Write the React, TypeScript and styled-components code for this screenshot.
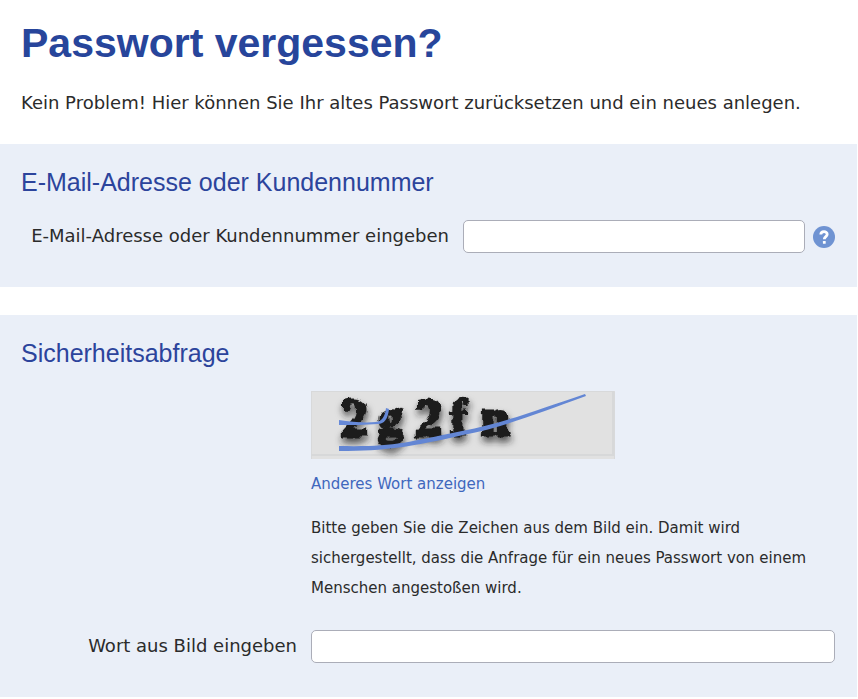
import React from "react";
import styled, { createGlobalStyle } from "styled-components";

const GlobalStyle = createGlobalStyle`
  *, *::before, *::after { box-sizing: border-box; }
  body {
    margin: 0;
    background: #fff;
    color: #2b2b2b;
    font-family: "DejaVu Sans", Verdana, sans-serif;
    font-size: 18px;
    line-height: 30px;
  }
`;

const Page = styled.main`
  padding-right: 1px;
`;

const Intro = styled.header`
  padding: 20px 21px 26px;
`;

const Title = styled.h1`
  margin: 0 0 22px;
  color: #27459b;
  font: bold 41px/46px "Liberation Sans", Arial, sans-serif;
`;

const Lead = styled.p`
  margin: 0;
`;

const Form = styled.form`
  display: flex;
  flex-direction: column;
  gap: 28px;
`;

const Panel = styled.section`
  padding: 23px 22px 34px 21px;
  background: #eaeff8;
`;

const PanelTitle = styled.h2`
  margin: 0 0 23px;
  color: #2c449c;
  font: normal 25px/30px "Liberation Sans", Arial, sans-serif;
`;

const Row = styled.div<{ $columns: string }>`
  display: grid;
  grid-template-columns: ${(p) => p.$columns};
  column-gap: 14px;
  align-items: center;
`;

const Label = styled.label`
  padding-bottom: 2px;
  text-align: right;
  white-space: nowrap;
`;

const TextInput = styled.input`
  width: 100%;
  min-width: 0;
  height: 33px;
  padding: 0 8px;
  border: 1px solid #abadb8;
  border-radius: 5px;
  background: #fff;
  color: inherit;
  font: inherit;
`;

const FieldWithHelp = styled.div`
  display: flex;
  align-items: center;
  gap: 8px;
`;

const HelpButton = styled.button`
  display: block;
  flex: none;
  padding: 0;
  border: 0;
  background: none;
  cursor: pointer;

  svg { display: block; }
`;

const CaptchaBlock = styled.div`
  grid-column: 2;
  margin-bottom: 27px;
  font-size: 15px;
`;

const CaptchaImage = styled.svg`
  display: block;
  max-width: 100%;
  overflow: visible;
`;

const Reload = styled.a`
  display: inline-block;
  margin: 10px 0 14px;
  color: #3f67bd;
  text-decoration: none;
`;

const Hint = styled.p`
  margin: 0;
`;

const letters = [
  { char: "2", x: 30, y: 45, size: 54 },
  { char: "g", x: 67, y: 43, size: 50 },
  { char: "2", x: 104, y: 45, size: 54 },
  { char: "f", x: 139, y: 43, size: 50 },
  { char: "n", x: 170, y: 44, size: 52 },
];

function HelpIcon() {
  return (
    <svg width="22" height="22" viewBox="0 0 22 22" aria-hidden="true">
      <circle cx="11" cy="11" r="11" fill="#6f93d2" />
      <path d="M7.8 8.6C7.8 4.8 14.2 4.7 14.2 8.3c0 2.4-2.9 2.3-2.9 5" fill="none" stroke="#fff" strokeWidth="2.8" />
      <rect x="9.9" y="15" width="2.8" height="2.8" rx="0.5" fill="#fff" />
    </svg>
  );
}

function Captcha() {
  return (
    <CaptchaImage width="304" height="68" viewBox="0 0 304 68" role="img" aria-label="Sicherheitsbild">
      <defs>
        <filter id="ink" x="-20%" y="-20%" width="140%" height="160%">
          <feTurbulence type="fractalNoise" baseFrequency="0.12" numOctaves="2" seed="4" result="noise" />
          <feDisplacementMap in="SourceGraphic" in2="noise" scale="7" xChannelSelector="R" yChannelSelector="G" result="rough" />
          <feGaussianBlur in="rough" stdDeviation="0.5" result="soft" />
          <feDropShadow in="soft" dx="1" dy="5" stdDeviation="3.5" floodColor="#222" floodOpacity="0.75" />
        </filter>
      </defs>
      <rect width="304" height="68" fill="#e1e1e1" />
      <path d="M0 .5H303.5V68M.5 0V68" fill="none" stroke="#d8d9da" />
      <path d="M0 64H302V0" fill="none" stroke="#d7d8d9" strokeWidth="2" />
      <g
        filter="url(#ink)"
        fontFamily="Liberation Serif, serif"
        fontWeight="bold"
        fill="#1d1d1d"
        stroke="#1d1d1d"
        strokeWidth="3"
      >
        {letters.map((l) => (
          <text key={l.x} x={l.x} y={l.y} fontSize={l.size}>{l.char}</text>
        ))}
      </g>
      <path d="M28 29C41 31 54 32 65 31C71 30 74 26 75 17L78 18C77 28 73 33 67 33C54 34 41 34 28 34Z" fill="#6689d8" />
      <path d="M28 55C83 56 92 52 151 40C193 32 226 19 274 3L275 5C227 22 194 36 152 44C99 56 76 60 28 60Z" fill="#6386d4" />
    </CaptchaImage>
  );
}

export default function App() {
  return (
    <>
      <GlobalStyle />
      <Page>
        <Intro>
          <Title>Passwort vergessen?</Title>
          <Lead>Kein Problem! Hier können Sie Ihr altes Passwort zurücksetzen und ein neues anlegen.</Lead>
        </Intro>
        <Form onSubmit={(e) => e.preventDefault()}>
          <Panel>
            <PanelTitle>E-Mail-Adresse oder Kundennummer</PanelTitle>
            <Row $columns="minmax(0, 428fr) minmax(0, 372fr)">
              <Label htmlFor="account">E-Mail-Adresse oder Kundennummer eingeben</Label>
              <FieldWithHelp>
                <TextInput id="account" type="text" />
                <HelpButton type="button" aria-label="Hilfe">
                  <HelpIcon />
                </HelpButton>
              </FieldWithHelp>
            </Row>
          </Panel>
          <Panel>
            <PanelTitle>Sicherheitsabfrage</PanelTitle>
            <Row $columns="minmax(0, 276fr) minmax(0, 524fr)">
              <CaptchaBlock>
                <Captcha />
                <Reload href="#">Anderes Wort anzeigen</Reload>
                <Hint>
                  Bitte geben Sie die Zeichen aus dem Bild ein. Damit wird sichergestellt, dass die Anfrage für ein
                  neues Passwort von einem Menschen angestoßen wird.
                </Hint>
              </CaptchaBlock>
              <Label htmlFor="word">Wort aus Bild eingeben</Label>
              <TextInput id="word" type="text" autoComplete="off" />
            </Row>
          </Panel>
        </Form>
      </Page>
    </>
  );
}
